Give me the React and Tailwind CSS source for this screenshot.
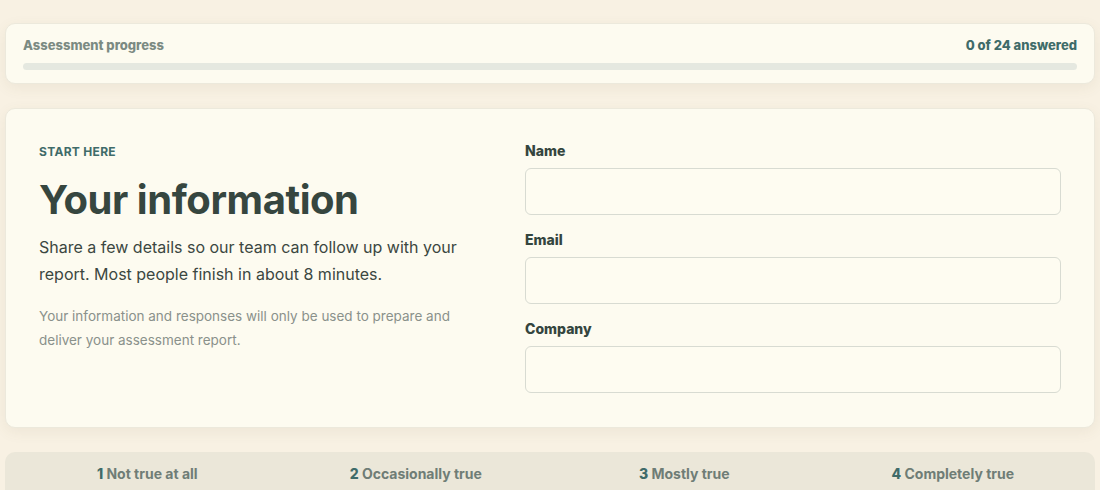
const scale = [
  { n: 1, label: "Not true at all" },
  { n: 2, label: "Occasionally true" },
  { n: 3, label: "Mostly true" },
  { n: 4, label: "Completely true" },
]

const fields = ["Name", "Email", "Company"]

export default function App() {
  return (
    <div className="min-h-[490px] bg-[#f8f1e3] px-[5px] pt-[23px] font-['Inter',sans-serif] overflow-hidden">
      {/* progress */}
      <div className="rounded-[10px] border border-[#ece9dc] bg-[#fdfbf0] px-[17px] pt-[11px] pb-[13px] shadow-[0_4px_14px_rgba(120,100,60,0.08)]">
        <div className="flex items-center justify-between text-[13px] leading-5 font-extrabold">
          <span className="text-[#7b8a82]">Assessment progress</span>
          <span className="text-[#3f6b69]">0 of 24 answered</span>
        </div>
        <div className="mt-2 h-[7px] rounded-full bg-[#e5e8e0]" />
      </div>

      {/* info card */}
      <div className="mt-6 rounded-[10px] border border-[#ece9dc] bg-[#fdfbf0] px-[33px] pt-[32px] pb-[34px] shadow-[0_4px_14px_rgba(120,100,60,0.08)]">
        <div className="grid grid-cols-[452px_1fr] gap-[34px]">
          <div className="pt-px">
            <div className="text-xs leading-5 font-bold tracking-wide text-[#3f6b69]">START HERE</div>
            <h1 className="mt-4 text-[40px] leading-[44px] font-bold tracking-[-0.011em] text-[#36463f]">Your information</h1>
            <p className="mt-3 text-base leading-[27px] text-[#3b4741]">
              Share a few details so our team can follow up with your report. Most people finish in about 8 minutes.
            </p>
            <p className="mt-4 text-[13.5px] leading-6 text-[#8a918b]">
              Your information and responses will only be used to prepare and deliver your assessment report.
            </p>
          </div>
          <div className="flex flex-col gap-[15px]">
            {fields.map((f) => (
              <label key={f} className="block">
                <span className="block text-sm leading-5 font-extrabold text-[#34453e]">{f}</span>
                <input
                  type="text"
                  className="mt-[7px] block h-[47px] w-full rounded-md border border-[#d8dbd2] bg-[#fefcf1] px-3 outline-none"
                />
              </label>
            ))}
          </div>
        </div>
      </div>

      {/* scale legend */}
      <div className="mt-6 grid grid-cols-4 rounded-t-[10px] bg-[#ebe7d9] px-2 pt-3 pb-4">
        {scale.map((s) => (
          <div key={s.n} className="text-center text-sm leading-5 font-bold text-[#6f7d76]">
            <span className="font-extrabold text-[#3f6b69]">{s.n}</span> {s.label}
          </div>
        ))}
      </div>
    </div>
  )
}
